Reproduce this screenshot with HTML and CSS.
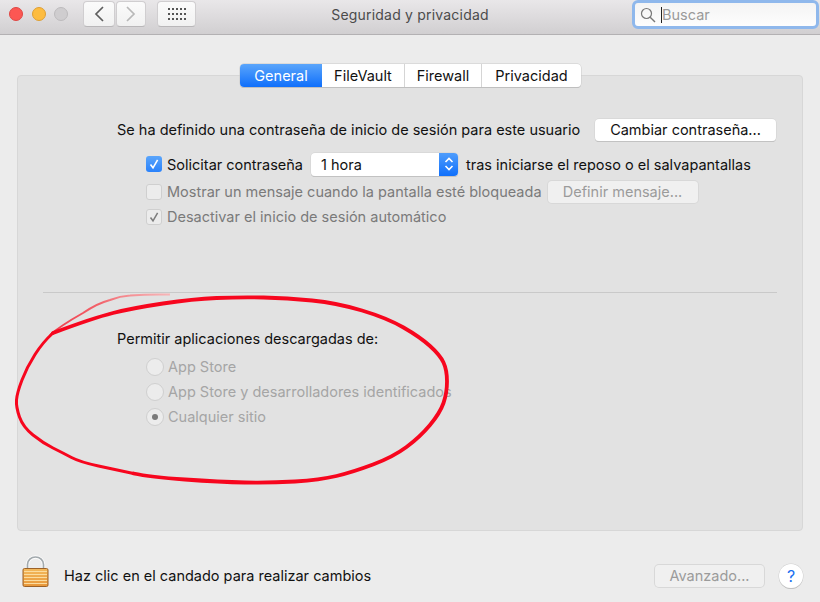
FILE: index.html
```html
<!DOCTYPE html>
<html lang="es">
<head>
<meta charset="utf-8">
<title>Seguridad y privacidad</title>
<link rel="stylesheet" href="styles.css">
</head>
<body>
<div class="window">
  <header class="toolbar">
    <div class="tb-left">
      <div class="lights">
        <span class="light red"></span>
        <span class="light yellow"></span>
        <span class="light gray"></span>
      </div>
      <div class="nav">
        <span class="tb-btn back"><svg width="12" height="18" viewBox="0 0 12 18"><path d="M10 2 3 9l7 7" fill="none" stroke="#5e5e5e" stroke-width="1.7"/></svg></span>
        <span class="tb-btn fwd"><svg width="12" height="18" viewBox="0 0 12 18"><path d="M2 2l7 7-7 7" fill="none" stroke="#b8b8b8" stroke-width="1.7"/></svg></span>
      </div>
      <span class="tb-btn grid-btn">
        <svg width="18" height="14" viewBox="0 0 18 14" fill="#555"><rect x="0" y="0" width="2" height="2"/><rect x="4" y="0" width="2" height="2"/><rect x="8" y="0" width="2" height="2"/><rect x="12" y="0" width="2" height="2"/><rect x="16" y="0" width="2" height="2"/><rect x="0" y="5" width="2" height="2"/><rect x="4" y="5" width="2" height="2"/><rect x="8" y="5" width="2" height="2"/><rect x="12" y="5" width="2" height="2"/><rect x="16" y="5" width="2" height="2"/><rect x="0" y="10" width="2" height="2"/><rect x="4" y="10" width="2" height="2"/><rect x="8" y="10" width="2" height="2"/><rect x="12" y="10" width="2" height="2"/><rect x="16" y="10" width="2" height="2"/></svg>
      </span>
    </div>
    <div class="title">Seguridad y privacidad</div>
    <div class="tb-right">
      <div class="search">
        <svg width="16" height="16" viewBox="0 0 16 16"><circle cx="6.5" cy="6.5" r="5" fill="none" stroke="#777" stroke-width="1.2"/><path d="M10.2 10.2 15 15" stroke="#777" stroke-width="1.4"/></svg>
        <span class="caret"></span>
        <span class="search-text">Buscar</span>
      </div>
    </div>
  </header>

  <main class="content">
    <nav class="tabs">
      <span class="tab active t1">General</span>
      <span class="tab t2">FileVault</span>
      <span class="tab t3">Firewall</span>
      <span class="tab t4">Privacidad</span>
    </nav>
    <section class="panel">
      <div class="row pw-row">
        <span class="label">Se ha definido una contraseña de inicio de sesión para este usuario</span>
        <span class="button change">Cambiar contraseña...</span>
      </div>
      <div class="opts">
        <div class="row r-ask">
          <span class="check on"><svg width="12" height="12" viewBox="0 0 12 12"><path d="M2.5 6.5 5 9.8 9.6 1.8" fill="none" stroke="#fff" stroke-width="1.6"/></svg></span>
          <span class="label">Solicitar contraseña</span>
          <span class="select"><span class="select-text">1 hora</span><span class="stepper"><svg width="10" height="16" viewBox="0 0 10 16"><path d="M1.5 6 5 2.5 8.5 6M1.5 10 5 13.5 8.5 10" fill="none" stroke="#fff" stroke-width="1.6"/></svg></span></span>
          <span class="label">tras iniciarse el reposo o el salvapantallas</span>
        </div>
        <div class="row r-msg">
          <span class="check off"></span>
          <span class="label dim">Mostrar un mensaje cuando la pantalla esté bloqueada</span>
          <span class="button disabled define">Definir mensaje...</span>
        </div>
        <div class="row r-auto">
          <span class="check off"><svg width="12" height="12" viewBox="0 0 12 12"><path d="M2.5 6.5 5 9.8 9.6 1.8" fill="none" stroke="#7d7d7d" stroke-width="1.5"/></svg></span>
          <span class="label dim">Desactivar el inicio de sesión automático</span>
        </div>
      </div>
      <hr class="divider">
      <div class="label allow">Permitir aplicaciones descargadas de:</div>
      <div class="radios">
        <div class="radio-row"><span class="radio"></span><span class="label faint">App Store</span></div>
        <div class="radio-row"><span class="radio"></span><span class="label faint">App Store y desarrolladores identificados</span></div>
        <div class="radio-row"><span class="radio sel"></span><span class="label faint">Cualquier sitio</span></div>
      </div>
    </section>
    <footer class="footer">
      <svg class="lock" width="27" height="33" viewBox="0 0 27 33">
        <defs>
          <linearGradient id="body" x1="0" y1="0" x2="0" y2="1"><stop offset="0" stop-color="#f3b95c"/><stop offset="1" stop-color="#e8973a"/></linearGradient>
        </defs>
        <path d="M5.5 14V9.5a8 7.5 0 0 1 16 0V14" fill="none" stroke="#fff" stroke-width="3.4" opacity=".85"/>
        <path d="M5.5 14V9.5a8 7.5 0 0 1 16 0V14" fill="none" stroke="#a2a9ad" stroke-width="1.7"/>
        <rect x="1" y="13.5" width="25" height="18" rx="1.5" fill="url(#body)" stroke="#9c6127" stroke-width="1"/>
        <path d="M2 16.5h23M2 19.5h23M2 22.5h23M2 25.5h23M2 28.5h23" stroke="#fbdc9f" stroke-width="1"/>
      </svg>
      <span class="label foot-text">Haz clic en el candado para realizar cambios</span>
      <span class="button disabled advanced">Avanzado...</span>
      <span class="help">?</span>
    </footer>
  </main>

  <svg class="scribble" width="820" height="602" viewBox="0 0 820 602">
    <defs>
      <linearGradient id="fade" x1="0" y1="1" x2="1" y2="0"><stop offset="0" stop-color="#f03a4a"/><stop offset=".6" stop-color="#f2636b"/><stop offset="1" stop-color="#f7b5b7"/></linearGradient>
    </defs>
    <path d="M50 335Q60 326 83 313 98 303 110 300 120 296 130 295.5 150 294 170 294.6" fill="none" stroke="url(#fade)" stroke-width="2"/>
    <path d="M53 333Q93 318 113 313Q133 308 163 303.5Q193 299 216.5 298Q240 297 263.5 297.5Q287 298 312 300.5Q337 303 362 310.5Q387 318 403.5 327.5Q420 337 430 346Q440 355 443.5 362.5Q447 370 447 381.5Q447 393 443.5 403Q440 413 430 425Q420 437 406.5 447Q393 457 373 464.5Q353 472 336.5 476Q320 480 295 481.5Q270 483 245 482.5Q220 482 185 479.5Q150 477 133.5 473.5" fill="none" stroke="#f7061e" stroke-width="3.8" stroke-linecap="round"/>
    <path d="M133.5 473.5Q117 470 98.5 466Q80 462 71.5 457.5Q63 453 53 448Q43 443 33 435Q23 427 19.5 417Q16 407 16.5 400Q17 393 22 380Q27 367 35 354.5Q43 342 53 333" fill="none" stroke="#f7061e" stroke-width="3" stroke-linecap="round"/>
  </svg>
</div>
</body>
</html>
```
FILE: styles.css
```css
* { box-sizing: border-box; }
html, body { margin: 0; padding: 0; }
body { font-family: Inter, "Liberation Sans", sans-serif; font-size: 14.5px; color: #111; }

.window { position: relative; width: 820px; height: 602px; overflow: hidden; background: #ececec; display: flex; flex-direction: column; }

/* toolbar */
.toolbar { height: 35px; flex: none; display: grid; grid-template-columns: 1fr auto 1fr; align-items: start; background: linear-gradient(#e9e7e9, #d1cfd1); border-bottom: 1px solid #b3b1b3; }
.tb-left { display: flex; align-items: flex-start; padding-left: 9px; }
.lights { display: flex; gap: 8.5px; padding-top: 6.5px; width: 74px; }
.light { width: 14px; height: 14px; border-radius: 50%; }
.red { background: #fc5753; border: 1px solid #df4744; }
.yellow { background: #fdbc40; border: 1px solid #de9f34; }
.gray { background: #cfcdcf; border: 1px solid #bdbbbd; }
.nav { display: flex; gap: 1px; margin-right: 11px; }
.tb-btn { height: 26px; margin-top: 1px; display: flex; align-items: center; justify-content: center; background: linear-gradient(#fbfbfb, #f1f1f1); border: 1px solid #d0ced0; border-bottom-color: #b9b7b9; border-radius: 4px; }
.back { width: 32px; }
.fwd { width: 30px; }
.grid-btn { width: 39px; }
.grid-btn svg { margin-top: 2px; }
.title { font-size: 14px; color: #4b4b4b; padding-top: 6px; letter-spacing: .2px; }
.tb-right { display: flex; justify-content: flex-end; padding-right: 1px; }
.search { width: 187px; height: 29px; display: flex; align-items: center; padding-left: 5px; background: linear-gradient(#f4f4f4, #fdfdfd); border: 3px solid #8fb8ec; border-radius: 6px; }
.caret { width: 1px; height: 16px; background: #222; margin-left: 5px; }
.search-text { font-size: 14.5px; color: #9a9a9a; }

/* content */
.content { flex: 1; display: flex; flex-direction: column; align-items: center; padding-top: 29px; }
.tabs { display: flex; height: 23px; position: relative; z-index: 1; margin-bottom: -12px; margin-left: 1px; background: #fff; border-radius: 4px; box-shadow: 0 0 0 .5px #c9c9c9, 0 1px 0 #b5b5b5; }
.tab { display: flex; align-items: center; justify-content: center; font-size: 14.5px; color: #111; border-right: 1px solid #d5d5d5; }
.tab:last-child { border-right: 0; }
.t1 { width: 82px; }
.t2 { width: 83px; }
.t3 { width: 77px; }
.t4 { width: 99px; }
.active { background: linear-gradient(#5aa5fb, #0f6ffb); color: #fff; border-radius: 4px 0 0 4px; border-right: 0; }

.panel { width: 786px; height: 456px; flex: none; background: #e2e2e2; border: 1px solid #d7d7d7; border-radius: 4px; padding: 42px 26px 0 99px; }
.row { display: flex; align-items: center; }
.label { font-size: 14.5px; white-space: nowrap; color: #111; }
.dim { color: #7a7a7a; }
.faint { color: #a5a5a5; }

.pw-row { justify-content: space-between; height: 23px; }
.button { display: flex; align-items: center; justify-content: center; height: 22px; font-size: 14.5px; border-radius: 4px; background: #fff; box-shadow: 0 0 0 .5px #cfcfcf, 0 1px 0 #b5b5b5; color: #111; }
.change { width: 181px; }
.disabled { background: #f0f0f0; color: #9b9b9b; box-shadow: 0 0 0 1px #d8d8d8; }

.opts { padding-left: 29px; }
.r-ask { margin-top: 11px; height: 24px; }
.r-msg { margin-top: 4px; height: 23px; }
.r-auto { margin-top: 2px; height: 23px; }
.check { width: 16px; height: 16px; flex: none; display: flex; align-items: center; justify-content: center; border-radius: 3px; margin-right: 5px; }
.check.on { background: linear-gradient(#5aa5fb, #2a82fb); }
.check.off { background: #ececec; border: 1px solid #cfcfcf; }
.select { position: relative; display: flex; align-items: center; width: 147px; height: 23px; margin: 0 8px; padding-left: 10px; background: #fff; border-radius: 4px; box-shadow: 0 0 0 .5px #cfcfcf, 0 1px 0 #b5b5b5; }
.select-text { font-size: 14.5px; }
.stepper { position: absolute; right: 0; top: 0; width: 19px; height: 23px; display: flex; align-items: center; justify-content: center; background: linear-gradient(#4f9dfc, #0f6ffb); border-radius: 0 4px 4px 0; }
.define { width: 150px; margin-left: 6px; }

.divider { width: 734px; height: 1px; margin: 64px 0 0 -74px; border: 0; background: #c9c9c9; }
.allow { margin-top: 37px; line-height: 17px; }
.radios { padding: 10px 0 0 29px; display: flex; flex-direction: column; gap: 6px; }
.radio-row { display: flex; align-items: center; height: 19px; }
.radio { width: 18px; height: 18px; flex: none; border-radius: 50%; background: #ececec; border: 1px solid #cfcfcf; margin-right: 4px; display: flex; align-items: center; justify-content: center; }
.sel::after { content: ""; width: 6px; height: 6px; border-radius: 50%; background: #7b7b7b; }

/* footer */
.footer { width: 100%; display: flex; align-items: center; padding: 32px 17px 0 22px; }
.lock { flex: none; margin-top: -8px; }
.foot-text { margin-left: 15px; flex: 1; }
.advanced { width: 109px; margin-right: 15px; }
.help { width: 24px; height: 24px; border-radius: 50%; display: flex; align-items: center; justify-content: center; background: #fff; color: #1a6ff0; font-size: 16px; box-shadow: 0 0 0 .5px #cfcfcf, 0 1px 0 #b5b5b5; }

/* hand-drawn annotation over the window */
.scribble { position: absolute; left: 0; top: 0; pointer-events: none; }
```
